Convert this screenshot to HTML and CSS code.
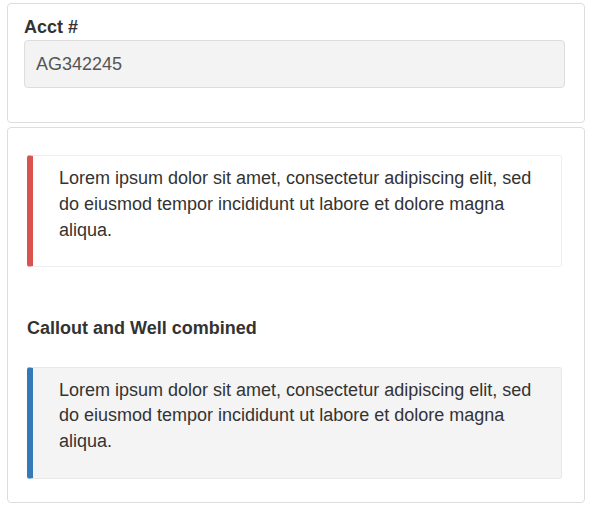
FILE: index.html
```html
<!DOCTYPE html>
<html lang="en">
<head>
  <meta charset="UTF-8" />
  <title>Callouts</title>
  <link rel="stylesheet" href="styles.css">
</head>
<body>
  <div class="panel panel-form">
    <label class="field-label" for="acct">Acct #</label>
    <input id="acct" class="form-control" type="text" value="AG342245" readonly>
  </div>

  <div class="panel panel-callouts">
    <div class="callout callout-danger">
      <p>Lorem ipsum dolor sit amet, consectetur adipiscing elit, sed do eiusmod tempor incididunt ut labore et dolore magna aliqua.</p>
    </div>

    <h4 class="section-title">Callout and Well combined</h4>

    <div class="callout callout-primary well">
      <p>Lorem ipsum dolor sit amet, consectetur adipiscing elit, sed do eiusmod tempor incididunt ut labore et dolore magna aliqua.</p>
    </div>
  </div>
</body>
</html>
```

FILE: styles.css
```css
body {
  margin: 0;
  font-family: "Liberation Sans", Arial, sans-serif;
  font-size: 18px;
  line-height: 25.7px;
  color: #333;
  background: #fff;
}

.panel {
  box-sizing: border-box;
  width: 578px;
  margin-left: 7px;
  border: 1px solid #ddd;
  border-radius: 4px;
  background: #fff;
}

.panel-form {
  margin-top: 3px;
  padding: 10.5px 19px 34px 16px;
}

.field-label {
  display: block;
  font-weight: bold;
}

.form-control {
  display: block;
  box-sizing: border-box;
  width: 100%;
  height: 48px;
  margin: 0;
  padding: 0 11px;
  font-family: inherit;
  font-size: 18px;
  color: #555;
  background: #f3f3f3;
  border: 1px solid #ddd;
  border-radius: 4px;
  outline: none;
}

.panel-callouts {
  margin-top: 4px;
  padding: 27px 22px 23px 19px;
}

.callout {
  border: 1px solid #eee;
  border-left-width: 6px;
  border-radius: 3px;
  padding: 10px 25px 23px 26px;
}

.callout p {
  margin: 0;
}

.callout-danger {
  border-left-color: #d9534f;
}

.callout-primary {
  border-left-color: #337ab7;
}

.well {
  background: #f4f4f4;
  border-top-color: #e8e8e8;
  border-right-color: #e8e8e8;
  border-bottom-color: #e8e8e8;
}

.section-title {
  margin: 48.5px 0 25px;
  font-size: 18px;
  line-height: 25.7px;
  font-weight: bold;
}
```
